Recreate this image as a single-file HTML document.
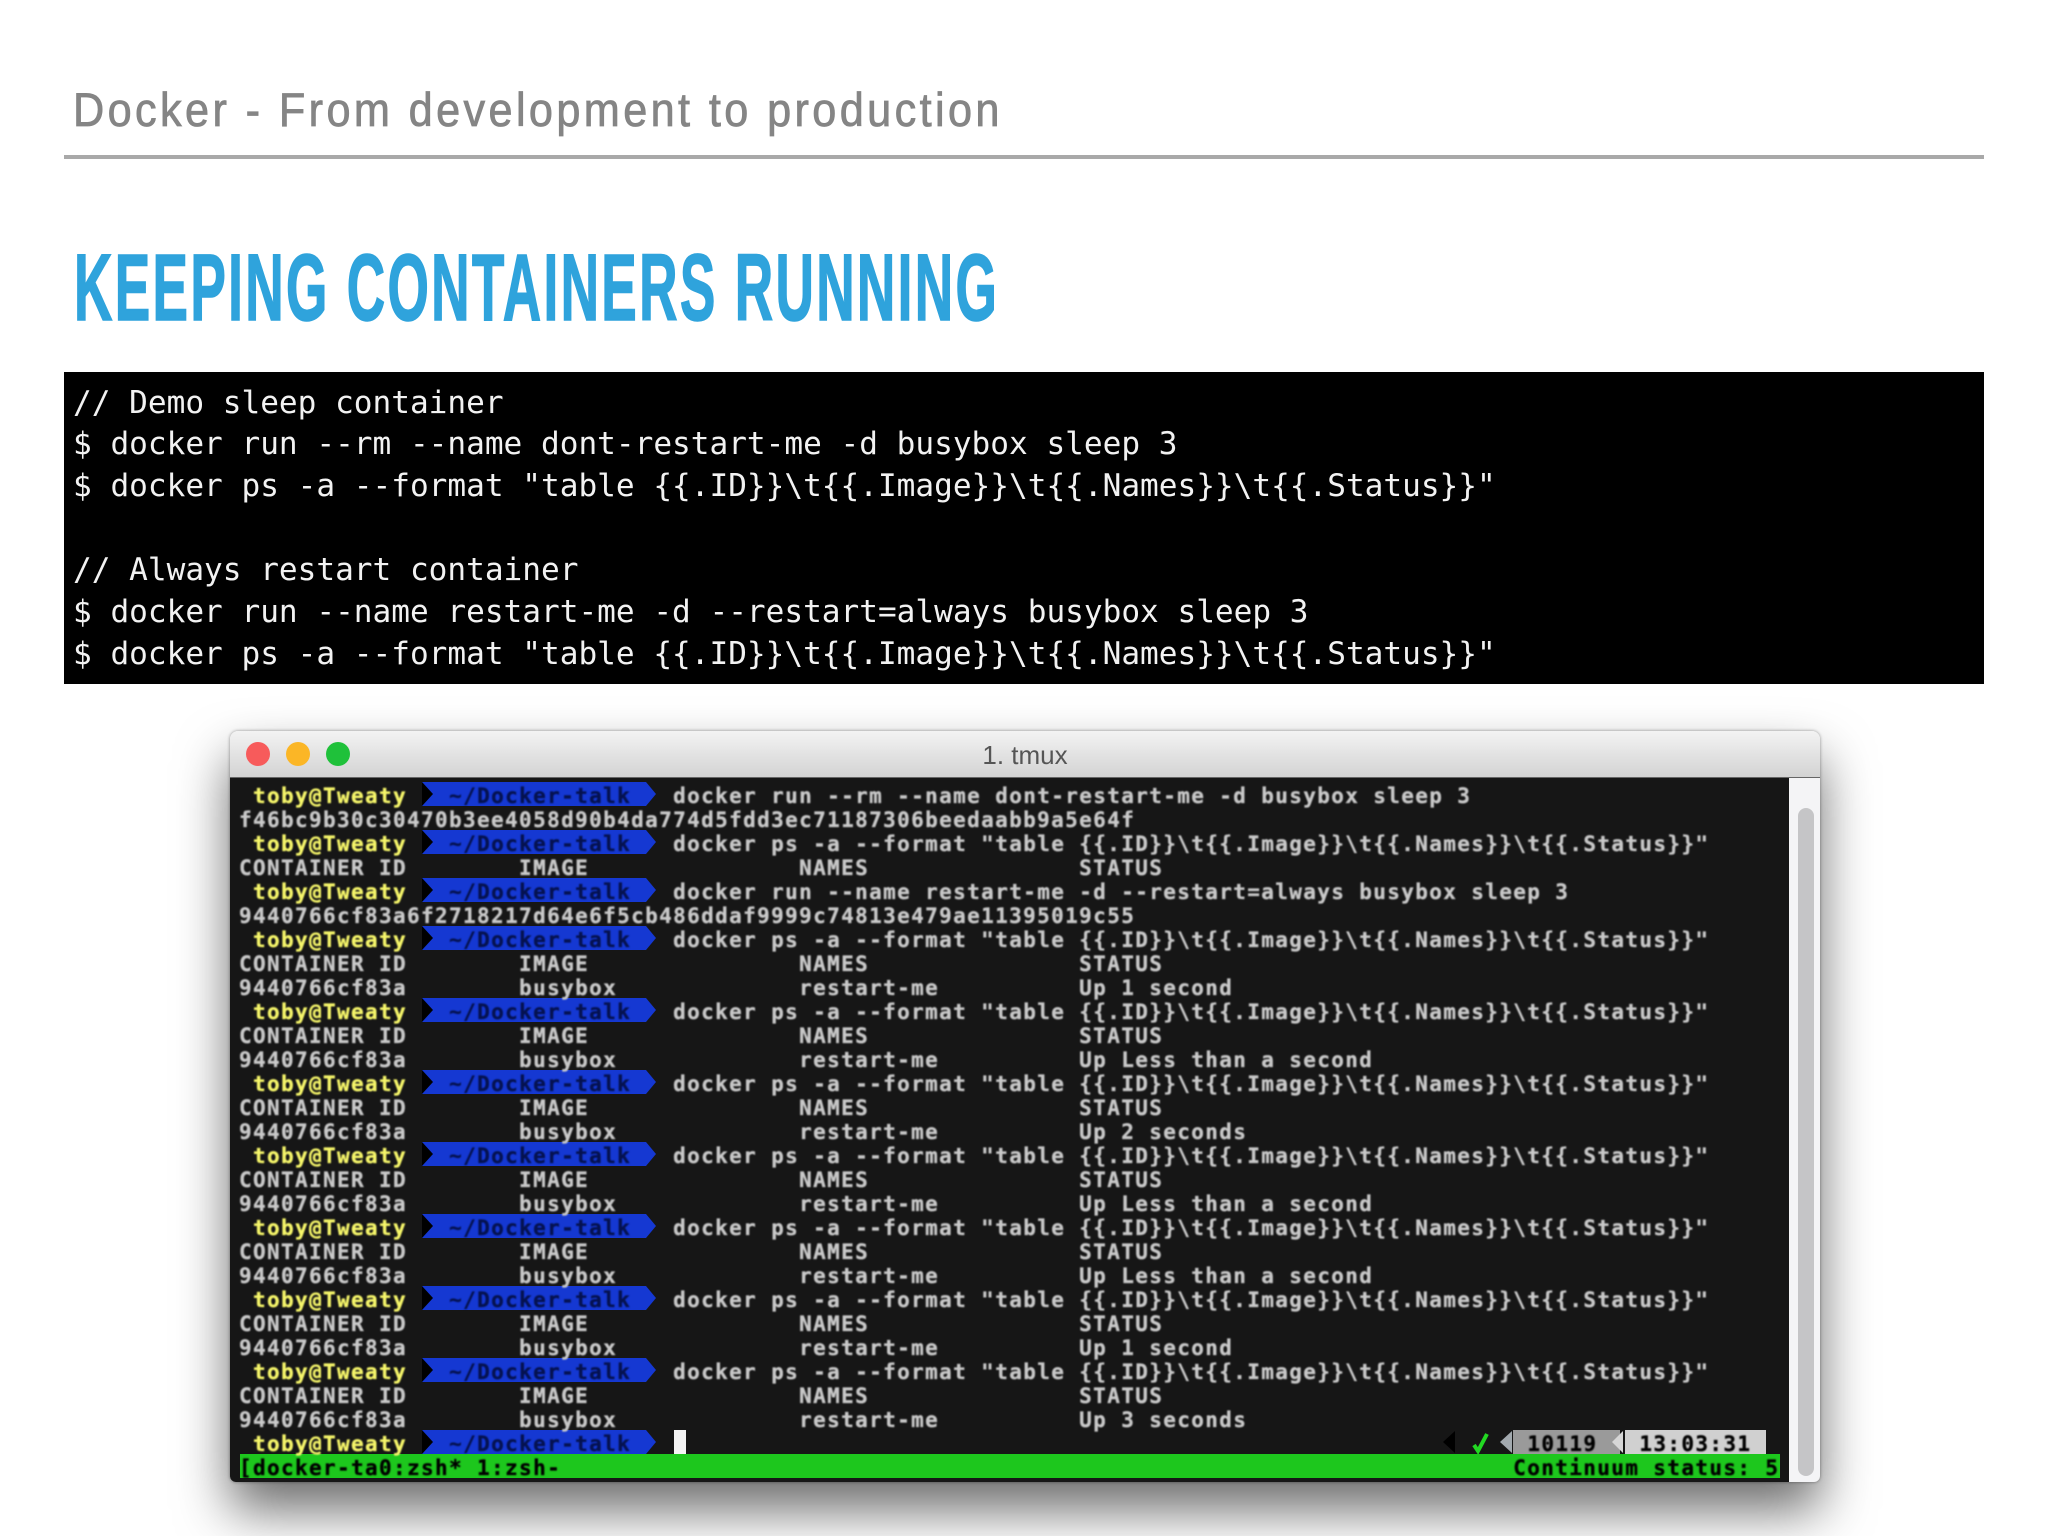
<!DOCTYPE html>
<html lang="en">
<head>
<meta charset="utf-8">
<title>Keeping containers running</title>
<style>
html,body{margin:0;padding:0;background:#fff;}
body{position:relative;width:2048px;height:1536px;overflow:hidden;font-family:"Liberation Sans",sans-serif;}
svg.top{position:absolute;left:0;top:0;}
.rule{position:absolute;left:64px;top:155px;width:1920px;height:4px;background:#a9a9a9;}
.code{position:absolute;left:64px;top:372px;width:1920px;height:312px;background:#000;}
.code pre{position:absolute;left:9px;top:10.5px;margin:0;font-family:"DejaVu Sans Mono","Liberation Mono",monospace;font-size:31.1px;line-height:41.85px;color:#f2f2f2;}
.win{position:absolute;left:230px;top:731px;width:1590px;height:751px;background:#f4f4f6;border-radius:8px 8px 6px 6px;box-shadow:0 28px 52px rgba(0,0,0,.58),0 0 3px rgba(0,0,0,.4);}
.bar{position:absolute;left:0;top:0;width:1590px;height:47px;border-radius:8px 8px 0 0;background:linear-gradient(#f3f3f3,#d3d3d3);border-bottom:1px solid #666;box-sizing:border-box;text-align:center;font-size:26px;line-height:48px;color:#555;}
.dot{position:absolute;top:742px;width:24px;height:24px;border-radius:50%;}
.term{position:absolute;left:230px;top:778px;width:1559px;height:704px;background:#161616;border-radius:0 0 0 6px;overflow:hidden;}
.thumb{position:absolute;left:1798px;top:808px;width:16px;height:668px;background:#c5c5c7;border-radius:8px;}
.b{position:absolute;left:422px;width:234px;height:24px;background:#1538d2;clip-path:polygon(0 0,224px 0,234px 12px,224px 24px,0 24px);}
.b:before{content:"";position:absolute;left:0;top:0;width:11px;height:24px;background:#000;clip-path:polygon(0 0,100% 50%,0 100%);}
.green{position:absolute;left:240px;top:1454px;width:1540px;height:24px;background:#1dc71d;}
pre.t{position:absolute;left:239px;top:784px;margin:0;font-family:"DejaVu Sans Mono","Liberation Mono",monospace;font-weight:bold;font-size:21px;letter-spacing:1.36px;line-height:24px;color:#c9c9c9;-webkit-text-stroke:.3px currentColor;filter:blur(.7px);white-space:pre;}
pre.t i{font-style:normal;color:#f6f66a;}
pre.t u{text-decoration:none;color:#05124f;}
pre.t s{text-decoration:none;color:#000;}
.cur{position:absolute;left:674px;top:1430px;width:12px;height:24px;background:#f4f4f4;}
.seg{position:absolute;top:1430px;height:24px;}
</style>
</head>
<body>
<svg class="top" width="2048" height="340" viewBox="0 0 2048 340">
<text transform="translate(73,126) scale(.92,1)" textLength="1007" lengthAdjust="spacing" font-family="Liberation Sans" font-size="47" fill="#858585" stroke="#858585" stroke-width=".8">Docker - From development to production</text>
<text transform="translate(74,320) scale(.56,1)" textLength="1648" lengthAdjust="spacing" font-family="Liberation Sans" font-weight="bold" font-size="95" fill="#2fa3dc" stroke="#2fa3dc" stroke-width="1.5">KEEPING CONTAINERS RUNNING</text>
</svg>
<div class="rule"></div>
<div class="code"><pre>// Demo sleep container
$ docker run --rm --name dont-restart-me -d busybox sleep 3
$ docker ps -a --format "table {{.ID}}\t{{.Image}}\t{{.Names}}\t{{.Status}}"

// Always restart container
$ docker run --name restart-me -d --restart=always busybox sleep 3
$ docker ps -a --format "table {{.ID}}\t{{.Image}}\t{{.Names}}\t{{.Status}}"</pre></div>

<div class="win"><div class="bar">1. tmux</div></div>
<div class="dot" style="left:246px;background:#f75b5b"></div>
<div class="dot" style="left:286px;background:#fbb626"></div>
<div class="dot" style="left:326px;background:#1fc13a"></div>
<div class="term"></div>
<div class="thumb"></div>

<div class="b" style="top:782px"></div>
<div class="b" style="top:830px"></div>
<div class="b" style="top:878px"></div>
<div class="b" style="top:926px"></div>
<div class="b" style="top:998px"></div>
<div class="b" style="top:1070px"></div>
<div class="b" style="top:1142px"></div>
<div class="b" style="top:1214px"></div>
<div class="b" style="top:1286px"></div>
<div class="b" style="top:1358px"></div>
<div class="b" style="top:1430px"></div>
<div class="green"></div>
<div class="cur"></div>

<svg class="seg" style="left:1440px" width="340" height="24" viewBox="0 0 340 24">
<polygon points="3,12 15,1 15,23" fill="#000"/>
<polygon points="60,12 72,1 72,23" fill="#a2a9ae"/>
<rect x="73" y="0" width="107" height="24" fill="#9a9a9a"/>
<polygon points="172,12 183,1 183,23" fill="#d6d6d6"/>
<rect x="185" y="0" width="141" height="24" fill="#d0d0d0"/>
<path d="M34 15 L38 21 L47 4" fill="none" stroke="#22d822" stroke-width="4"/>
</svg>

<pre class="t"><i> toby@Tweaty</i>   <u>~/Docker-talk</u>   docker run --rm --name dont-restart-me -d busybox sleep 3
f46bc9b30c30470b3ee4058d90b4da774d5fdd3ec71187306beedaabb9a5e64f
<i> toby@Tweaty</i>   <u>~/Docker-talk</u>   docker ps -a --format "table {{.ID}}\t{{.Image}}\t{{.Names}}\t{{.Status}}"
CONTAINER ID        IMAGE               NAMES               STATUS
<i> toby@Tweaty</i>   <u>~/Docker-talk</u>   docker run --name restart-me -d --restart=always busybox sleep 3
9440766cf83a6f2718217d64e6f5cb486ddaf9999c74813e479ae11395019c55
<i> toby@Tweaty</i>   <u>~/Docker-talk</u>   docker ps -a --format "table {{.ID}}\t{{.Image}}\t{{.Names}}\t{{.Status}}"
CONTAINER ID        IMAGE               NAMES               STATUS
9440766cf83a        busybox             restart-me          Up 1 second
<i> toby@Tweaty</i>   <u>~/Docker-talk</u>   docker ps -a --format "table {{.ID}}\t{{.Image}}\t{{.Names}}\t{{.Status}}"
CONTAINER ID        IMAGE               NAMES               STATUS
9440766cf83a        busybox             restart-me          Up Less than a second
<i> toby@Tweaty</i>   <u>~/Docker-talk</u>   docker ps -a --format "table {{.ID}}\t{{.Image}}\t{{.Names}}\t{{.Status}}"
CONTAINER ID        IMAGE               NAMES               STATUS
9440766cf83a        busybox             restart-me          Up 2 seconds
<i> toby@Tweaty</i>   <u>~/Docker-talk</u>   docker ps -a --format "table {{.ID}}\t{{.Image}}\t{{.Names}}\t{{.Status}}"
CONTAINER ID        IMAGE               NAMES               STATUS
9440766cf83a        busybox             restart-me          Up Less than a second
<i> toby@Tweaty</i>   <u>~/Docker-talk</u>   docker ps -a --format "table {{.ID}}\t{{.Image}}\t{{.Names}}\t{{.Status}}"
CONTAINER ID        IMAGE               NAMES               STATUS
9440766cf83a        busybox             restart-me          Up Less than a second
<i> toby@Tweaty</i>   <u>~/Docker-talk</u>   docker ps -a --format "table {{.ID}}\t{{.Image}}\t{{.Names}}\t{{.Status}}"
CONTAINER ID        IMAGE               NAMES               STATUS
9440766cf83a        busybox             restart-me          Up 1 second
<i> toby@Tweaty</i>   <u>~/Docker-talk</u>   docker ps -a --format "table {{.ID}}\t{{.Image}}\t{{.Names}}\t{{.Status}}"
CONTAINER ID        IMAGE               NAMES               STATUS
9440766cf83a        busybox             restart-me          Up 3 seconds
<i> toby@Tweaty</i>   <u>~/Docker-talk</u>                                                                <s>10119</s>   <s>13:03:31</s>
<s>[docker-ta0:zsh* 1:zsh-                                                                    Continuum status: 5</s></pre>
</body>
</html>
